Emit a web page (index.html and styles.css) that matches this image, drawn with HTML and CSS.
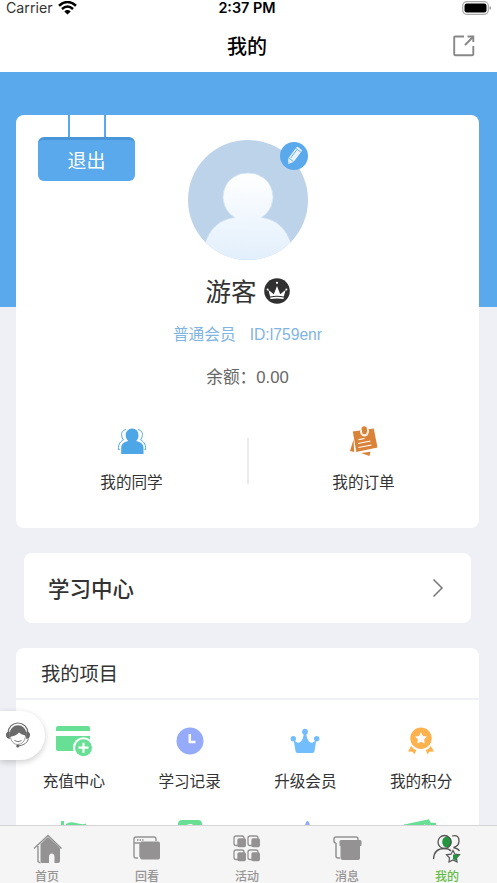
FILE: index.html
```html
<!DOCTYPE html>
<html lang="zh-CN">
<head>
<meta charset="utf-8">
<meta name="viewport" content="width=device-width, initial-scale=1">
<title>我的</title>
<link rel="stylesheet" href="styles.css">
</head>
<body>
<div class="app">
  <header class="topbar">
    <div class="status">
      <div class="carrier"><span>Carrier</span>
        <svg width="19" height="14" viewBox="0 0 19 14" fill="none" stroke="#000" stroke-width="2.5"><path d="M1 4.8Q9.500-2.700 18 4.800"/><path d="M4 8Q9.500 3 15 8"/><path d="M9.500 13.500L6.300 10.400Q9.500 7.800 12.700 10.400Z" fill="#000" stroke="none"/></svg>
      </div>
      <div class="clock">2:37 PM</div>
      <svg class="battery" width="30" height="15" viewBox="0 0 30 15"><rect x=".7" y=".7" width="25.600" height="12.600" rx="4" fill="none" stroke="#aaa" stroke-width="1.200"/><rect x="2.500" y="2.500" width="22" height="9" rx="2.200"/><path d="M27.600 5v4q1.500-.5 1.500-2t-1.500-2" fill="#999"/></svg>
    </div>
    <div class="nav">
      <h1>我的</h1>
      <svg class="share" width="22" height="22" viewBox="0 0 22 22" fill="none" stroke="#888" stroke-width="1.900"><path d="M11 1.500H2.200Q1.200 1.500 1.200 2.500V19Q1.200 20.300 2.500 20.300H19Q20.300 20.300 20.300 19V11M12 10L20 2M14.500 1.500H20.300V7"/></svg>
    </div>
  </header>

  <main class="content">
    <section class="card profile">
      <div class="logout"><i class="strings"></i><span>退出</span></div>
      <div class="avatar">
        <svg width="120" height="120" viewBox="0 0 120 120">
          <defs><clipPath id="round"><circle cx="60" cy="60" r="60"/></clipPath><linearGradient id="body" x1="0" y1="33" x2="0" y2="120" gradientUnits="userSpaceOnUse"><stop stop-color="#fff"/><stop offset="1" stop-color="#e2effc"/></linearGradient></defs>
          <g clip-path="url(#round)"><rect width="120" height="120" fill="#bdd3e9"/><path d="M60 33a24 24 0 0 0-13.500 44.500C32 79 21 89 17 104V120H103V104C99 89 88 79 73.500 77.500A24 24 0 0 0 60 33Z" fill="url(#body)" stroke="#cddff1" stroke-width=".8"/></g>
        </svg>
        <svg class="edit" width="28" height="28" viewBox="0 0 28 28"><circle cx="14" cy="14" r="14" fill="#5ba9ed"/><g transform="rotate(37 14 14)"><path d="M10.800 5.500Q10.800 4.500 11.800 4.500H16.200Q17.200 4.500 17.200 5.500V19L14 24L10.800 19Z" fill="#e8f3fd"/><path d="M12.500 7.500V17.500M10.800 18.800H17.200M10.800 6.800H17.200" fill="none" stroke="#5ba9ed" stroke-width=".8"/><path d="M12.600 21.700L14 24L15.400 21.700Z" fill="#b3d6f5"/></g></svg>
      </div>
      <div class="name"><span>游客</span>
        <svg width="26" height="26" viewBox="0 0 26 26"><circle cx="13" cy="13" r="12.800" fill="#303030"/><g fill="#fff"><path d="M4.300 11.800L9.800 16.300L13 8L16.200 16.300L21.700 11.800L19.800 18.500Q13 17 6.200 18.500Z"/><path d="M6.300 19.500Q13 18 19.700 19.500V21Q13 19.800 6.300 21Z"/><circle cx="3.600" cy="11.500" r="1"/><circle cx="22.400" cy="11.500" r="1"/><circle cx="13" cy="4.800" r="1.100"/></g></svg>
      </div>
      <div class="member"><span>普通会员</span><span>ID:l759enr</span></div>
      <div class="balance">余额：<span>0.00</span></div>
      <div class="shortcuts">
        <div class="shortcut">
          <svg width="30" height="30" viewBox="0 0 30 30"><path d="M15 2.500a6.300 6.300 0 0 0-6.300 6.500c0 2.800 1 4.600 2.500 6C6.500 16 4.200 18.200 4.200 22V28H26.500V22c0-3.800-2.400-6-7.300-7 1.600-1.400 2.300-3.200 2.300-6A6.300 6.300 0 0 0 15 2.500Z" fill="#4da6e6"/><path d="M9 3.500C5.500 4.500 4.200 6.500 4.700 9.500c.2 2 .8 3.200 1.800 4.300C3.500 15.500 1.400 17.500 1.300 23.500H2.800M21 3.500C24.500 4.500 25.800 6.500 25.300 9.500c-.2 2-.8 3.200-1.800 4.300 3 1.700 5.100 3.700 5.200 9.700H27.500" fill="none" stroke="#4da6e6" stroke-width="1"/></svg>
          <span>我的同学</span>
        </div>
        <i class="divider"></i>
        <div class="shortcut">
          <svg width="30" height="30" viewBox="0 0 30 30" fill="#da8238"><path d="M4.500 13.500L1 25L5.200 26ZM12 27L21.500 25.800L20.500 30Z"/><path d="M3.800 5.500L24.700 2.600L28.500 21.500L7.300 26Z"/><path d="M11.600 4.500Q11.600 9.800 15.600 9.800T19.300 3.500" fill="none" stroke="#fff" stroke-width="1.300"/><path d="M12.300 4Q12.500 8.600 15.600 8.600T18.600 3.300" fill="none" stroke="#fff" stroke-width="1"/><ellipse cx="15.200" cy="2.800" rx="2.700" ry="2.500"/><path d="M14 4.500H16.500L17.200 7.500H13.500Z"/><path d="M9.500 13.700L15.500 12.500M9.200 17.500L21.500 15M9.500 21.500L22.500 19" fill="none" stroke="#fff" stroke-width="1.200"/></svg>
          <span>我的订单</span>
        </div>
      </div>
    </section>

    <section class="card study"><h2>学习中心</h2>
      <svg width="12" height="20" viewBox="0 0 12 20" fill="none" stroke="#777" stroke-width="1.500"><path d="M1.500 1.500L10 10L1.500 18.500"/></svg>
    </section>

    <section class="card projects">
      <h3>我的项目</h3>
      <div class="grid">
        <div class="item"><svg width="38" height="32" viewBox="0 0 38 32" fill="#67df95"><path d="M1 3Q1 1 3 1H33Q35 1 35 3V6H1Z"/><path d="M1 11H35V22H19V26H3Q1 26 1 24Z"/><circle cx="28.500" cy="22.700" r="10.500" fill="#fff"/><circle cx="28.500" cy="22.700" r="8.500"/><path d="M23.500 22.700H33.500M28.500 17.700V27.700" stroke="#fff" stroke-width="2.200"/></svg><span>充值中心</span></div>
        <div class="item"><svg width="32" height="32" viewBox="0 0 32 32"><circle cx="16" cy="16" r="13.500" fill="#95abfa"/><path d="M15.800 9V17H21.500" fill="none" stroke="#fff" stroke-width="2.500"/></svg><span>学习记录</span></div>
        <div class="item"><svg width="32" height="32" viewBox="0 0 32 32" fill="#72bdfc"><circle cx="16" cy="6.700" r="2.900"/><circle cx="4.300" cy="13.700" r="2.700"/><circle cx="27.700" cy="13.700" r="2.700"/><path d="M4.500 14Q8 19.500 11.500 17Q14.500 14.500 15 7H17Q17.500 14.500 20.500 17Q24 19.500 27.500 14L25.500 26Q25.200 28 23.500 28H8.500Q6.800 28 6.500 26Z"/></svg><span>升级会员</span></div>
        <div class="item"><svg width="32" height="32" viewBox="0 0 32 32" fill="#fdb24e"><circle cx="16" cy="13.300" r="10.700"/><path d="M16 7.200L17.900 10.900L22 11.600L19.100 14.500L19.700 18.600L16 16.700L12.300 18.600L12.900 14.500L10 11.600L14.100 10.900Z" fill="#fff"/><path d="M6.200 21Q8 24 11.300 25L9.500 29.300L7.500 26.700L3 26.500ZM25.800 21Q24 24 20.700 25L22.500 29.300L24.500 26.700L29 26.500Z"/></svg><span>我的积分</span></div>
        <div class="item"><svg width="32" height="32" viewBox="0 0 32 32" fill="#67df95"><path d="M3 2H6V30H3ZM8 5Q12 2 18 4T28 4.500V19Q24 21 19 19T8 19Z"/></svg></div>
        <div class="item"><svg width="32" height="32" viewBox="0 0 32 32"><rect x="4" y="1" width="24" height="29" rx="4" fill="#67df95"/><circle cx="16" cy="9" r="4" fill="#fff"/></svg></div>
        <div class="item"><svg width="32" height="32" viewBox="0 0 32 32"><path d="M16 8Q16.500 2 18.500 2T21 8L25 27H10Z" fill="#95abfa"/></svg></div>
        <div class="item"><svg width="38" height="32" viewBox="0 0 38 32" fill="#67df95"><path d="M2 5.500L27 .200L28.500 3.500L34 4V23H5Z"/><path d="M21 8L23 5" stroke="#fff"/></svg></div>
      </div>
    </section>
  </main>

  <div class="service"><svg width="26" height="26" viewBox="0 0 26 26"><path d="M3.200 12V10.500A9.800 9.500 0 0 1 22.800 10.500V12" fill="none" stroke="#777" stroke-width="1.200"/><path d="M4.600 16V11.500A8.400 8.200 0 0 1 21.400 11.500V16L19.700 13.200Q16 12.800 14 10.500Q11 14 6.300 14.500Z" fill="#6b6b6b"/><path d="M5.500 15.500Q7 22.300 12.500 22.500Q19 22.300 20.500 14.500" fill="none" stroke="#888" stroke-width=".8"/><path d="M4.800 9.500Q1 9.500 1 13T4.800 17ZM21.200 9.500Q25 9.500 25 13T21.200 17Z" fill="#666"/><path d="M23.500 16.500Q22 23 13 24M9.500 18.500Q13 21 16.500 18.500" fill="none" stroke="#777" stroke-width="1"/><circle cx="12.800" cy="24" r="1.600" fill="#666"/></svg></div>

  <nav class="tabs">
    <a class="tab"><svg width="32" height="32" viewBox="0 0 32 32"><path d="M3 15.500L17 2.500L30.500 15.500M7 13V28.500L9.500 30" fill="none" stroke="#949292" stroke-width="1.400"/><path d="M9.500 11L17 4L29 15V28Q29 30 27 30H23.500V24Q23.500 20.500 20.800 20.500T18 24V30H11Q9.500 30 9.500 28Z" fill="#949292"/></svg><span>首页</span></a>
    <a class="tab"><svg width="32" height="32" viewBox="0 0 32 32"><path d="M7 25H5Q3 25 3 23V6Q3 4 5 4H23Q25 4 25 6V8M3 10H9M9 24V10" fill="none" stroke="#949292" stroke-width="1.400"/><path d="M6 7H13" stroke="#949292" stroke-width="1.400" stroke-dasharray="1.500 1"/><rect x="9" y="8.500" width="20" height="18" rx="2" fill="#949292"/></svg><span>回看</span></a>
    <a class="tab"><svg width="32" height="32" viewBox="0 0 32 32" fill="#949292" stroke="#949292" stroke-width="1.300"><g id="tile"><rect x="3" y="3" width="10" height="9.500" rx="2" fill="none"/><rect x="7" y="6" width="7.300" height="7.500" rx="1"/></g><use href="#tile" x="14"/><use href="#tile" y="14"/><use href="#tile" x="14" y="14"/></svg><span>活动</span></a>
    <a class="tab"><svg width="32" height="32" viewBox="0 0 32 32"><path d="M5 10Q3 10 3 8V6Q3 4 5 4H25Q27 4 27 6V7M5 10V23Q5 25 7 25H9" fill="none" stroke="#949292" stroke-width="1.500"/><path d="M10 7H29Q30.500 7 30.500 8.500V12Q30.500 13 29 13V25Q29 27 27 27H12Q9.500 27 9.500 25V13H8.500V8.500Q8.500 7 10 7Z" fill="#949292"/></svg><span>消息</span></a>
    <a class="tab active"><svg width="32" height="32" viewBox="0 0 32 32"><ellipse cx="16" cy="9" rx="4.800" ry="5.500" fill="#239440"/><g fill="none" stroke="#555" stroke-width="1.300"><circle cx="13.500" cy="9" r="6.500"/><path d="M2.500 26Q3 15.500 13.500 15.500Q18 15.500 20 18M21 3Q28 1 28 8Q28 13 22.500 14.500Q27 15.500 28.500 18"/></g><path d="M22 17.500L24 21.200L28.500 21.800L25.500 24.800L26 29L22 27L18 29L18.500 24.800L15.500 21.800L20 21.200Z" fill="#f5f5f5" stroke="#555" stroke-width="1.200"/><path d="M22 21.500H25L28.500 22L25.500 25L25.200 28L22 26Z" fill="#239440"/></svg><span>我的</span></a>
  </nav>
</div>
</body>
</html>
```
FILE: styles.css
```css
* { box-sizing: border-box; }
body { margin: 0; background: #eff0f5; color: #333; font-family: "Noto Sans CJK SC", sans-serif; }
h1, h2, h3 { margin: 0; }
svg { display: block; flex: none; }
.app { position: relative; height: 883px; display: flex; flex-direction: column; overflow: hidden; }

.topbar { height: 72px; flex: none; background: #fff; color: #000; }
.status { height: 16px; padding: 0 5px 0 6px; display: grid; grid-template-columns: 1fr auto 1fr; align-items: center; font: 14.4px/16px Inter, sans-serif; }
.carrier { display: flex; align-items: center; gap: 5px; color: #333; font-size: 14.2px; }
.clock { font-weight: 600; margin-right: 4px; }
.battery { justify-self: end; }
.nav { height: 56px; padding: 0 22px; display: grid; grid-template-columns: 1fr auto 1fr; align-items: center; }
.nav h1 { grid-column: 2; font-size: 20px; line-height: 28px; font-weight: 500; margin: 3px 3px 0 0; }
.share { justify-self: end; margin-top: 3px; }

.content { flex: 1; min-height: 0; overflow: hidden; padding: 43px 18px 0 16px; background: linear-gradient(#5ba9ed 235px, #eff0f5 235px); }
.card { background: #fff; border-radius: 8px; }
.profile { position: relative; height: 413px; padding-top: 25px; display: flex; flex-direction: column; align-items: center; }
.logout { position: absolute; left: 22px; top: 0; width: 97px; padding-top: 22px; }
.logout span { display: block; height: 44px; border-radius: 6px; border-top: 3px solid #4895d8; background: #5ba9ed; color: #fff; text-align: center; font-size: 19px; line-height: 39px; }
.strings { display: block; position: absolute; left: 30px; top: 0; width: 38px; height: 22px; border: solid #5ba9ed; border-width: 0 2px; }
.avatar { position: relative; height: 120px; }
.edit { position: absolute; left: 92px; top: 2px; }
.name { height: 38px; margin-top: 12px; display: flex; align-items: center; gap: 7px; font-size: 25.5px; line-height: 38px; }
.name span { margin-top: -2px; }
.member { margin-top: 13px; height: 24px; display: flex; gap: 14px; color: #80b5e3; font: 15.700px/24px "Liberation Sans", "Noto Sans CJK SC", sans-serif; }
.balance { margin-top: 19px; height: 24px; color: #666; font: 16.700px/24px "Liberation Sans", "Noto Sans CJK SC", sans-serif; }
.shortcuts { align-self: stretch; margin-top: 36px; display: grid; grid-template-columns: 1fr 1px 1fr; }
.shortcut { display: flex; flex-direction: column; align-items: center; gap: 13px; font-size: 15.600px; line-height: 24px; }
.divider { width: 2px; height: 46px; margin-top: 12px; background: #ececec; }

.study { height: 70px; margin: 25px 8px; padding: 0 27px 0 24px; display: flex; align-items: center; justify-content: space-between; }
.study h2 { font-size: 21.500px; line-height: 30px; font-weight: 500; margin-top: -1px; }
.projects { height: 300px; }
.projects h3 { height: 52px; padding-left: 25px; border-bottom: 2px solid #eff0f4; font-size: 19.300px; line-height: 50px; font-weight: 400; }
.grid { display: grid; grid-template-columns: repeat(4, 1fr); row-gap: 27px; padding-top: 25px; }
.item { display: flex; flex-direction: column; align-items: center; gap: 11px; font-size: 15.600px; line-height: 24px; }

.service { position: absolute; left: 0; top: 711px; width: 45px; height: 49px; padding: 11px 5px; background: #fff; border-radius: 0 25px 25px 0; box-shadow: 0 2px 6px #0003; }

.tabs { height: 58px; flex: none; margin-left: -3px; width: 500px; padding-top: 7px; display: grid; grid-template-columns: repeat(5, 100px); border-top: 1px solid #d5d5d5; background: #f5f5f5; z-index: 1; }
.tab { display: flex; flex-direction: column; align-items: center; color: #969494; font-size: 12px; line-height: 18px; gap: 2px; font-weight: 500; }
.tab.active { color: #67bc47; }
```
